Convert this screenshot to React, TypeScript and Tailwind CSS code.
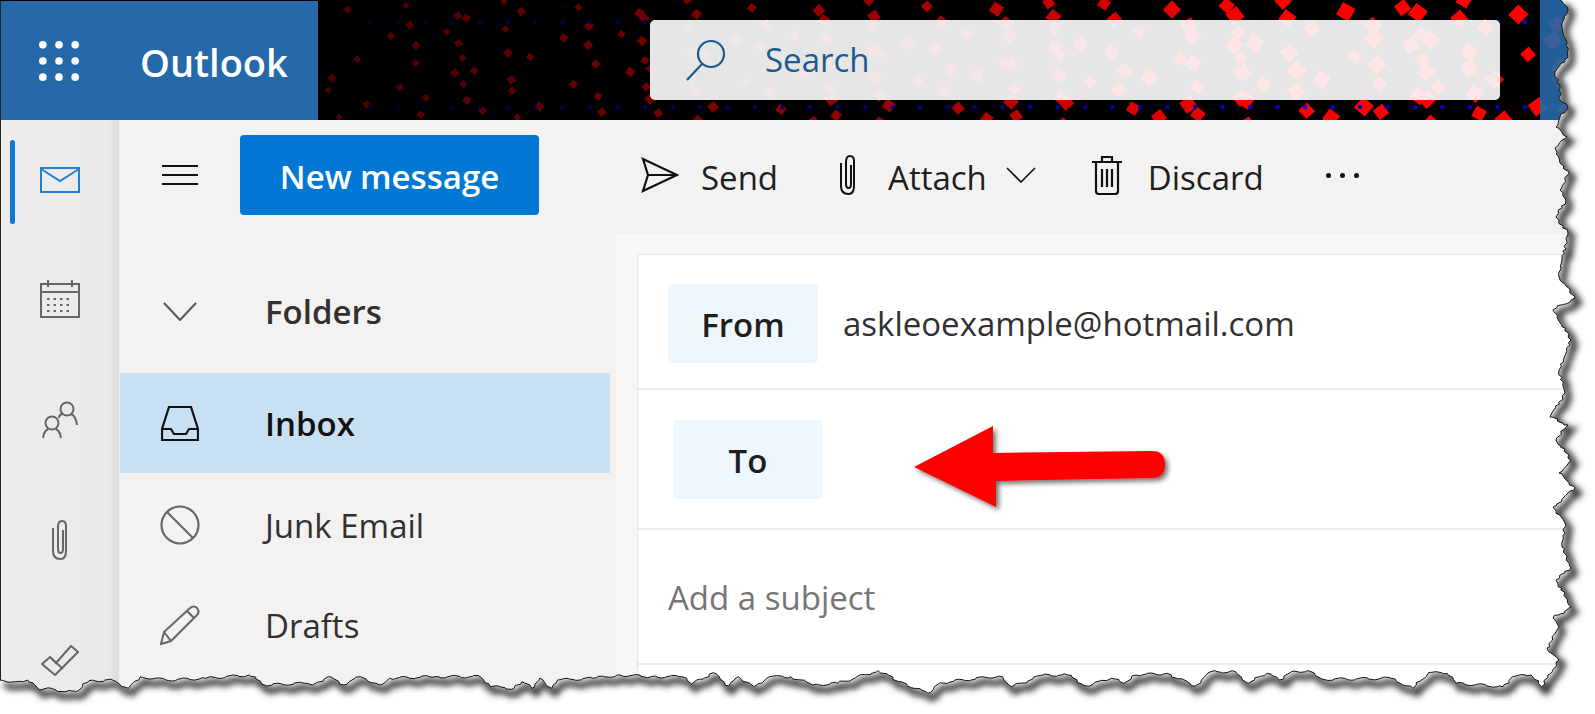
import React from "react";

// traced from the reference: torn right edge, then torn bottom edge (page coordinates)
const rightTop: number[][] = [
  [1560, 0], [1568, 10], [1562, 23], [1563, 33], [1567, 43], [1568, 57], [1555, 72], [1560, 88], [1560, 100], [1568, 108],
  [1560, 117], [1556, 127], [1567, 137], [1555, 148], [1560, 163], [1569, 172], [1560, 190], [1566, 200], [1556, 217], [1568, 233],
  [1562, 260], [1559, 277], [1575, 298], [1553, 310], [1571, 340], [1559, 370], [1565, 393], [1550, 417], [1568, 425], [1556, 440],
  [1571, 460], [1559, 473], [1575, 488], [1553, 507], [1565, 523], [1562, 547], [1571, 568], [1556, 580], [1571, 607], [1553, 618],
  [1559, 627], [1547, 648], [1559, 660],
];

const bottomA: [number, number][] = [
  [1482, 1280], [1465, 1245], [1435, 1250], [1420, 1280], [1345, 1270], [1330, 1240], [1300, 1238], [1275, 1285], [1240, 1255],
  [1130, 1258], [1105, 1232], [1080, 1235], [1060, 1260], [1040, 1240], [1010, 1270], [990, 1235], [950, 1235], [925, 1278],
  [880, 1240], [830, 1245], [810, 1270], [790, 1255], [750, 1278], [720, 1245], [680, 1245], [630, 1280], [610, 1248], [515, 1268],
  [495, 1300], [450, 1265], [415, 1232], [350, 1270], [310, 1275], [275, 1250], [240, 1250], [215, 1280], [190, 1250], [175, 1278],
  [150, 1238], [115, 1272], [100, 1250], [50, 1250], [0, 1245],
];
const bottomB: [number, number][] = [
  [1500, 955], [1410, 960], [1395, 985], [1365, 955], [1345, 985], [1320, 965], [1300, 985], [1240, 980], [1215, 950], [1100, 950],
  [985, 955], [960, 975], [910, 950], [870, 975], [830, 950], [790, 975], [770, 970], [670, 975], [630, 945], [520, 955], [420, 960],
  [355, 950], [325, 985], [285, 960], [225, 962], [200, 990], [165, 995], [130, 985], [100, 990], [70, 960], [40, 965], [0, 960],
];

function tornLine() {
  const rough: number[][] = [
    ...rightTop,
    ...bottomA.map(([x, y]) => [620 + x / 1.608, 260 + y / 3]),
    ...bottomB.map(([x, y]) => [x / 2.529, 360 + y / 3]),
  ];
  const pts: string[] = [];
  rough.forEach(([x, y], i) => {
    const next = rough[i + 1];
    pts.push(`${x.toFixed(1)},${y.toFixed(1)}`);
    if (!next) return;
    const len = Math.hypot(next[0] - x, next[1] - y);
    const steps = Math.floor(len / 3);
    for (let s = 1; s < steps; s++) {
      const t = s / steps;
      const j1 = Math.sin(i * 12.9 + s * 78.2) * 1.3;
      const j2 = Math.sin(i * 39.3 + s * 11.7) * 1.3;
      pts.push(`${(x + (next[0] - x) * t + j1).toFixed(1)},${(y + (next[1] - y) * t + j2).toFixed(1)}`);
    }
  });
  return pts;
}

const torn = tornLine();
const tornPath = "M" + torn.join(" L");
const outsidePath = tornPath + " L0,714 L1595,714 L1595,0 Z";

function TornEdge() {
  return (
    <svg className="absolute inset-0 pointer-events-none" width="1595" height="714" viewBox="0 0 1595 714">
      <defs>
        <clipPath id="outside">
          <path d={outsidePath} />
        </clipPath>
        <filter id="tornBlur" x="-5%" y="-5%" width="110%" height="110%">
          <feGaussianBlur stdDeviation="3" />
        </filter>
      </defs>
      <path d={outsidePath} fill="#fff" />
      <g clipPath="url(#outside)">
        <path d={tornPath} transform="translate(4 5)" fill="none" stroke="#333" strokeWidth="6" filter="url(#tornBlur)" />
      </g>
      <path d={tornPath} fill="none" stroke="#111" strokeWidth="1" />
    </svg>
  );
}

function Sparkles() {
  const dots: React.ReactNode[] = [];
  for (let r = 0; r < 14; r++) {
    const y = 4 + r * 9;
    for (let i = -1; i < 15; i++) {
      const x0 = 320 + i * 89 + ((r * 37) % 89);
      // break up the lattice so the dots don't read as diagonal stripes
      const x = x0 + Math.sin(r * 91.7 + i * 47.3) * 17;
      const yy = y + Math.sin(r * 23.1 + i * 71.9) * 4;
      if (x < 326 || x > 1600) continue;
      const k = Math.pow(Math.min(1, Math.max(0, (x - 320) / 950)), 1.5);
      const size = (2.8 + k * 3.4) * (0.85 + 0.3 * Math.abs(Math.sin(r * 5.3 + i * 3.1)));
      const red = Math.round(75 + 180 * k);
      const tilt = 45 + ((r * 13 + i * 7) % 30) - 15;
      dots.push(
        <rect
          key={`${r}-${i}`}
          x={x - size}
          y={yy - size}
          width={size * 2}
          height={size * 2}
          fill={`rgb(${red},0,0)`}
          transform={`rotate(${tilt} ${x} ${yy})`}
        />,
      );
    }
  }
  for (const y of [22, 107]) {
    for (let x = 370; x < 1600; x += 27.5) {
      const k = Math.min(1, (x - 320) / 950);
      dots.push(<circle key={`b${y}-${x}`} cx={x} cy={y} r={2.2} fill={`rgb(0,0,${Math.round(35 + 170 * k)})`} />);
    }
  }
  return (
    <svg className="absolute inset-0" width="1595" height="120" viewBox="0 0 1595 120">
      {dots}
    </svg>
  );
}

function Waffle() {
  const cs = [0, 19, 38];
  return (
    <svg width="40" height="40" viewBox="-4.5 -4.5 47 47" fill="#fff">
      {cs.map((y) => cs.map((x) => <circle key={`${x}${y}`} cx={x} cy={y} r="4.5" />))}
    </svg>
  );
}

function Arrow() {
  return (
    <svg className="absolute left-[905px] top-[420px]" width="275" height="100" viewBox="905 420 275 100">
      <defs>
        <filter id="arrowShadow" x="-10%" y="-20%" width="120%" height="140%">
          <feDropShadow dx="3" dy="3" stdDeviation="2.5" floodColor="#000" floodOpacity="0.55" />
        </filter>
      </defs>
      <path
        d="M914 467 L993 426 L993 453 L1152 451 Q1165 451 1165 464.5 Q1165 478 1152 478 L996 481 L996 507 Z"
        fill="#fe0000"
        filter="url(#arrowShadow)"
      />
    </svg>
  );
}

const railIcon = "stroke-[#666] fill-none";

function RailItem({ children, active }: { children: React.ReactNode; active?: boolean }) {
  return (
    <div className="relative flex h-[120px] items-center justify-center">
      {active && <div className="absolute left-[9px] top-[20px] h-[84px] w-[5px] rounded-full bg-[#0f78d4]" />}
      {children}
    </div>
  );
}

function NavRow({ icon, label, className }: { icon: React.ReactNode; label: string; className?: string }) {
  return (
    <div className={`flex h-[100px] items-center ${className ?? ""}`}>
      <div className="flex w-[145px] justify-center pr-[25px]">{icon}</div>
      <span className="pt-[1px]">{label}</span>
    </div>
  );
}

export default function App() {
  return (
    <div
      className="relative h-[714px] w-[1595px] overflow-hidden bg-white text-[33px] text-[#323130]"
      style={{ fontFamily: "'Open Sans', 'Noto Sans', sans-serif" }}
    >
      <header className="relative flex h-[120px] bg-black">
        <Sparkles />
        <div className="relative mt-[1px] flex w-[318px] items-center border-l border-[#222] bg-[#2669a9]">
          <div className="flex w-[119px] justify-center pr-[3px]">
            <Waffle />
          </div>
          <span className="ml-[20px] mt-[3px] text-[38px] font-semibold text-white">Outlook</span>
        </div>
        <div className="relative ml-[332px] mt-[20px] flex h-[80px] w-[850px] items-center rounded-[5px] bg-white/90">
          <svg className="ml-[35px]" width="42" height="42" viewBox="0 0 42 42" fill="none" stroke="#1f5a8f" strokeWidth="2.2">
            <circle cx="26" cy="15" r="13" />
            <path d="M17 25 L2 41" />
          </svg>
          <span className="ml-[38px] text-[#1f5a8f]">Search</span>
        </div>
        <div className="relative ml-[40px] flex-1 bg-[#2669a9]/90" />
      </header>

      <div className="flex h-[594px] border-l border-[#222] bg-[#f3f2f1]">
        <nav className="w-[118px] shrink-0 bg-gradient-to-r from-[#eeedec] via-[#ebeaea] via-90% to-[#dfdedd]">
          <RailItem active>
            <svg width="40" height="26" viewBox="0 0 40 26" fill="none" stroke="#1f7fd0" strokeWidth="2">
              <rect x="1" y="1" width="38" height="24" />
              <path d="M1 2 L20 14 L39 2" />
            </svg>
          </RailItem>
          <RailItem>
            <svg className={`mb-[3px] ${railIcon}`} width="40" height="38" viewBox="0 0 40 38" strokeWidth="2">
              <rect x="1" y="4" width="38" height="33" />
              <path d="M1 12 H39 M8 0 V7 M32 0 V7" />
              <path d="M7 19 H33 M7 25 H33 M7 31 H33" strokeDasharray="2.5 4" />
            </svg>
          </RailItem>
          <RailItem>
            <svg width="36" height="38" viewBox="0 0 36 38" className={railIcon} strokeWidth="2">
              <circle cx="25" cy="8" r="6.5" />
              <path d="M17 17 Q17 13 21 13 M29 13 Q34 15 35 24" />
              <circle cx="10" cy="22" r="6.5" />
              <path d="M1 37 Q2 30 6 28 M14 28 Q18 30 19 37" />
            </svg>
          </RailItem>
          <RailItem>
            <svg className={`ml-[2px] ${railIcon}`} width="20" height="40" viewBox="0 0 20 40" strokeWidth="2">
              <path d="M12 10 V29 Q12 33 9.5 33 Q7 33 7 29 V7 Q7 1 11 1 Q15 1 15 6 V31 Q15 39 9.5 39 Q2 39 2 31 V8" />
            </svg>
          </RailItem>
          <RailItem>
            <svg width="38" height="31" viewBox="0 0 38 31" className={railIcon} strokeWidth="2">
              <path d="M14 30 L1 19 L9 12 L15 18 L30 1 L37 7 L14 30 Z M9 12 L22 24" />
            </svg>
          </RailItem>
        </nav>

        <div className="flex min-w-0 flex-1 flex-col">
          <div className="flex h-[114px] shrink-0 items-center pb-[4px]">
            <div className="flex w-[121px] justify-center">
              <svg width="36" height="20" viewBox="0 0 36 20" stroke="#111" strokeWidth="2">
                <path d="M0 1 H36 M0 10 H36 M0 19 H36" />
              </svg>
            </div>
            <button className="flex h-[80px] w-[299px] items-center justify-center rounded-[4px] bg-[#0078d4] pt-[4px] text-[33px] font-semibold text-white">
              New message
            </button>
            <div className="ml-[102px] flex items-center text-[#201f1e]">
              <svg width="38" height="36" viewBox="0 0 38 36" fill="none" stroke="#111" strokeWidth="2.2">
                <path d="M2 2 L36 18 L2 34 L7 18 Z M7 18 H36" />
              </svg>
              <span className="ml-[22px] pt-[5px]">Send</span>
              <svg className="ml-[60px]" width="22" height="40" viewBox="0 0 20 40" fill="none" stroke="#111" strokeWidth="2">
                <path d="M12 10 V29 Q12 33 9.5 33 Q7 33 7 29 V7 Q7 1 11 1 Q15 1 15 6 V31 Q15 39 9.5 39 Q2 39 2 31 V8" />
              </svg>
              <span className="ml-[28px] pt-[5px]">Attach</span>
              <svg className="ml-[19px]" width="30" height="16" viewBox="0 0 30 16" fill="none" stroke="#111" strokeWidth="1.6">
                <path d="M1 1 L15 15 L29 1" />
              </svg>
              <svg className="ml-[55px]" width="32" height="40" viewBox="0 0 32 40" fill="none" stroke="#111" strokeWidth="2.2">
                <path d="M1 7 H31 M5 7 V36 Q5 39 8 39 H24 Q27 39 27 36 V7 M11 7 V2 H21 V7 M11 14 V32 M16 14 V32 M21 14 V32" />
              </svg>
              <span className="ml-[25px] pt-[5px]">Discard</span>
              <div className="ml-[62px] flex gap-[9px]">
                <span className="h-[5px] w-[5px] rounded-full bg-[#111]" />
                <span className="h-[5px] w-[5px] rounded-full bg-[#111]" />
                <span className="h-[5px] w-[5px] rounded-full bg-[#111]" />
              </div>
            </div>
          </div>

          <div className="flex min-h-0 flex-1">
            <aside className="w-[497px] shrink-0 pl-[1px]">
              <NavRow
                className="mt-[27px] font-semibold"
                label="Folders"
                icon={
                  <svg width="34" height="19" viewBox="0 0 34 19" fill="none" stroke="#555" strokeWidth="2">
                    <path d="M1 1 L17 18 L33 1" />
                  </svg>
                }
              />
              <NavRow
                className="mt-[12px] w-[490px] bg-[#c7e0f4] font-semibold text-[#111]"
                label="Inbox"
                icon={
                  <svg width="38" height="35" viewBox="0 0 38 35" fill="none" stroke="#111" strokeWidth="2.2">
                    <path d="M1 34 V23 L8 1 H30 L37 23 V34 Z M1 23 H10 L13 28 H25 L28 23 H37" />
                  </svg>
                }
              />
              <NavRow
                className="mt-[2px]"
                label="Junk Email"
                icon={
                  <svg width="40" height="40" viewBox="0 0 40 40" fill="none" stroke="#666" strokeWidth="2.2">
                    <circle cx="20" cy="20" r="18.5" />
                    <path d="M7 7 L33 33" />
                  </svg>
                }
              />
              <NavRow
                label="Drafts"
                icon={
                  <svg width="40" height="40" viewBox="0 0 40 40" fill="none" stroke="#666" strokeWidth="2">
                    <path d="M1 39 L4 27 L30 3 Q34 0 37 3 Q40 7 37 10 L11 36 Z M4 27 L11 36 M27 6 L34 13" />
                  </svg>
                }
              />
            </aside>

            <section className="min-w-0 flex-1 bg-[#f8f7f6] pl-[21px] pt-[20px]">
              <div className="h-full border-l border-t border-[#e6e6e6] bg-white">
                <div className="h-[135px] border-b-2 border-[#ececec] pl-[30px] pt-[29px]">
                  <div className="flex items-center">
                    <div className="flex h-[79px] w-[150px] items-center justify-center rounded-[4px] bg-[#eff6fc] pt-[2px] font-semibold text-[#201f1e]">
                      From
                    </div>
                    <span className="ml-[25px]">askleoexample@hotmail.com</span>
                  </div>
                </div>
                <div className="h-[140px] border-b-2 border-[#ececec] pl-[35px] pt-[30px]">
                  <div className="flex h-[79px] w-[150px] items-center justify-center rounded-[4px] bg-[#eff6fc] pt-[2px] font-semibold text-[#201f1e]">
                    To
                  </div>
                </div>
                <div className="flex h-[135px] items-center border-b-2 border-[#ececec] pl-[30px] pt-[2px] text-[#767676]">Add a subject</div>
              </div>
            </section>
          </div>
        </div>
      </div>

      <Arrow />
      <TornEdge />
    </div>
  );
}
